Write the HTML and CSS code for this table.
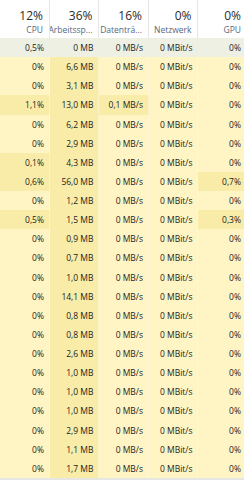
FILE: index.html
```html
<!DOCTYPE html>
<html lang="de">
<head>
<meta charset="utf-8">
<title>Task-Manager</title>
<link rel="stylesheet" href="styles.css">
</head>
<body>
<div class="tm">
  <div class="head">
    <div class="hcell"><span class="pct">12%</span><span class="lbl">CPU</span></div>
    <div class="hcell"><span class="pct">36%</span><span class="lbl">Arbeitssp...</span></div>
    <div class="hcell"><span class="pct">16%</span><span class="lbl">Datenträ...</span></div>
    <div class="hcell"><span class="pct">0%</span><span class="lbl">Netzwerk</span></div>
    <div class="hcell"><span class="pct">0%</span><span class="lbl">GPU</span></div>
  </div>
  <div class="row sel"><div class="c">0,5%</div><div class="c">0 MB</div><div class="c">0 MB/s</div><div class="c">0 MBit/s</div><div class="c">0%</div></div>
  <div class="row"><div class="c">0%</div><div class="c hot">6,6 MB</div><div class="c">0 MB/s</div><div class="c">0 MBit/s</div><div class="c">0%</div></div>
  <div class="row"><div class="c">0%</div><div class="c hot">3,1 MB</div><div class="c">0 MB/s</div><div class="c">0 MBit/s</div><div class="c">0%</div></div>
  <div class="row"><div class="c hot">1,1%</div><div class="c hot">13,0 MB</div><div class="c hot">0,1 MB/s</div><div class="c">0 MBit/s</div><div class="c">0%</div></div>
  <div class="row"><div class="c">0%</div><div class="c hot">6,2 MB</div><div class="c">0 MB/s</div><div class="c">0 MBit/s</div><div class="c">0%</div></div>
  <div class="row"><div class="c">0%</div><div class="c hot">2,9 MB</div><div class="c">0 MB/s</div><div class="c">0 MBit/s</div><div class="c">0%</div></div>
  <div class="row"><div class="c hot">0,1%</div><div class="c hot">4,3 MB</div><div class="c">0 MB/s</div><div class="c">0 MBit/s</div><div class="c">0%</div></div>
  <div class="row"><div class="c hot">0,6%</div><div class="c hot">56,0 MB</div><div class="c">0 MB/s</div><div class="c">0 MBit/s</div><div class="c hot">0,7%</div></div>
  <div class="row"><div class="c">0%</div><div class="c hot">1,2 MB</div><div class="c">0 MB/s</div><div class="c">0 MBit/s</div><div class="c">0%</div></div>
  <div class="row"><div class="c hot">0,5%</div><div class="c hot">1,5 MB</div><div class="c">0 MB/s</div><div class="c">0 MBit/s</div><div class="c hot">0,3%</div></div>
  <div class="row"><div class="c">0%</div><div class="c hot">0,9 MB</div><div class="c">0 MB/s</div><div class="c">0 MBit/s</div><div class="c">0%</div></div>
  <div class="row"><div class="c">0%</div><div class="c hot">0,7 MB</div><div class="c">0 MB/s</div><div class="c">0 MBit/s</div><div class="c">0%</div></div>
  <div class="row"><div class="c">0%</div><div class="c hot">1,0 MB</div><div class="c">0 MB/s</div><div class="c">0 MBit/s</div><div class="c">0%</div></div>
  <div class="row"><div class="c">0%</div><div class="c hot">14,1 MB</div><div class="c">0 MB/s</div><div class="c">0 MBit/s</div><div class="c">0%</div></div>
  <div class="row"><div class="c">0%</div><div class="c hot">0,8 MB</div><div class="c">0 MB/s</div><div class="c">0 MBit/s</div><div class="c">0%</div></div>
  <div class="row"><div class="c">0%</div><div class="c hot">0,8 MB</div><div class="c">0 MB/s</div><div class="c">0 MBit/s</div><div class="c">0%</div></div>
  <div class="row"><div class="c">0%</div><div class="c hot">2,6 MB</div><div class="c">0 MB/s</div><div class="c">0 MBit/s</div><div class="c">0%</div></div>
  <div class="row"><div class="c">0%</div><div class="c hot">1,0 MB</div><div class="c">0 MB/s</div><div class="c">0 MBit/s</div><div class="c">0%</div></div>
  <div class="row"><div class="c">0%</div><div class="c hot">1,0 MB</div><div class="c">0 MB/s</div><div class="c">0 MBit/s</div><div class="c">0%</div></div>
  <div class="row"><div class="c">0%</div><div class="c hot">1,0 MB</div><div class="c">0 MB/s</div><div class="c">0 MBit/s</div><div class="c">0%</div></div>
  <div class="row"><div class="c">0%</div><div class="c hot">2,9 MB</div><div class="c">0 MB/s</div><div class="c">0 MBit/s</div><div class="c">0%</div></div>
  <div class="row"><div class="c">0%</div><div class="c hot">1,1 MB</div><div class="c">0 MB/s</div><div class="c">0 MBit/s</div><div class="c">0%</div></div>
  <div class="row"><div class="c">0%</div><div class="c hot">1,7 MB</div><div class="c">0 MB/s</div><div class="c">0 MBit/s</div><div class="c">0%</div></div>
</div>
</body>
</html>
```
FILE: styles.css
```css
html, body {
  margin: 0;
  padding: 0;
  background: #e6e6e2;
}
body {
  width: 244px;
  height: 480px;
  overflow: hidden;
  font-family: "Open Sans", "Noto Sans", sans-serif;
}
.tm {
  width: 244px;
}
.head {
  display: grid;
  grid-template-columns: repeat(4, 49.5px) 1fr;
  height: 38px;
  background: #ffffff;
}
.hcell {
  display: flex;
  flex-direction: column;
  align-items: flex-end;
  padding: 9px 5.5px 0 0;
  border-right: 1px solid #e5e5e5;
  box-sizing: border-box;
  white-space: nowrap;
  overflow: hidden;
}
.hcell:last-child {
  padding-right: 3px;
  border-right: none;
}
.pct {
  font-size: 12px;
  line-height: 14px;
  color: #2b2b2b;
}
.lbl {
  margin-top: 2px;
  font-size: 8.5px;
  line-height: 10px;
  color: #56677b;
}
.row {
  display: grid;
  grid-template-columns: repeat(4, 49.5px) 1fr;
  height: 19.13px;
  font-size: 8.5px;
  line-height: 19.13px;
  color: #1c1c1c;
}
.c {
  text-align: right;
  padding-right: 5.5px;
  background: #fff4c4;
  box-shadow: inset -1px 0 0 rgba(255, 255, 255, 0.35);
  white-space: nowrap;
}
.c:last-child {
  padding-right: 3px;
  box-shadow: none;
}
.c.hot {
  background: #f9eca8;
}
.row.sel .c {
  background: #eef0e4;
  box-shadow: none;
}
```
